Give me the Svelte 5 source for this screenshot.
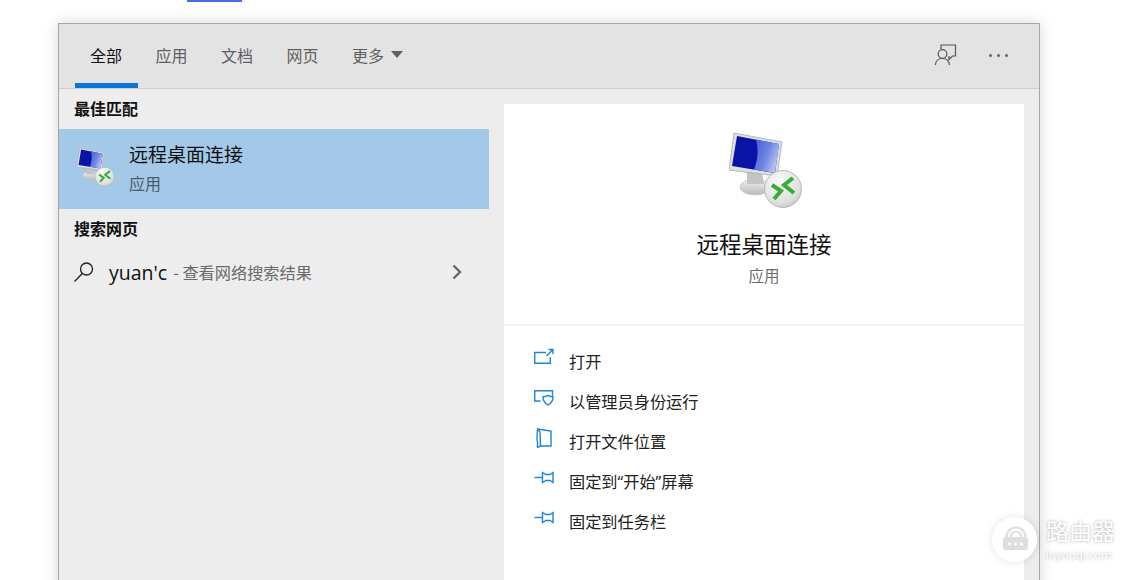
<script>
	const tabs = [
		{ label: '全部', active: true },
		{ label: '应用' },
		{ label: '文档' },
		{ label: '网页' },
		{ label: '更多', more: true }
	];

	const actions = [
		{ label: '打开', icon: 'open' },
		{ label: '以管理员身份运行', icon: 'shield' },
		{ label: '打开文件位置', icon: 'folder' },
		{ label: '固定到“开始”屏幕', icon: 'pin' },
		{ label: '固定到任务栏', icon: 'pin' }
	];
</script>

{#snippet rdpIcon(id, width, height)}
	<svg {width} {height} viewBox="15 12 74 76">
		<defs>
			<linearGradient id="gloss-{id}" x1="0" y1="0" x2="1" y2="0.5">
				<stop offset="0" stop-color="#3f5ad6" />
				<stop offset="0.6" stop-color="#7187e2" />
				<stop offset="1" stop-color="#b4c3f2" />
			</linearGradient>
			<radialGradient id="ball-{id}" cx="0.4" cy="0.3" r="0.85">
				<stop offset="0" stop-color="#fbfbfb" />
				<stop offset="0.7" stop-color="#dcdedd" />
				<stop offset="1" stop-color="#aeb2b0" />
			</radialGradient>
			<linearGradient id="base-{id}" x1="0" y1="0" x2="0" y2="1">
				<stop offset="0" stop-color="#f4f4f4" />
				<stop offset="1" stop-color="#b9b9b9" />
			</linearGradient>
		</defs>
		<ellipse cx="41" cy="67" rx="15" ry="8" fill="url(#base-{id})" stroke="#c6c6c6" stroke-width="0.8" />
		<path d="M33 52h15l2 12H33z" fill="#c4c4c4" />
		<path d="M20 13 L68 22 L63 56 L15 50 Z" fill="#dde0e3" stroke="#a4a9ad" stroke-width="0.8" />
		<path d="M23 16 L65 24 L61 53 L18 46 Z" fill="#0b12a6" />
		<path d="M42 19.500 L65 24 L61 53 L40 49.500 Q46 34 42 19.500 Z" fill="url(#gloss-{id})" />
		<circle cx="69" cy="69" r="18.500" fill="url(#ball-{id})" stroke="#a9adab" stroke-width="0.8" />
		<g fill="none" stroke="#35ae38" stroke-width="4" stroke-linejoin="miter">
			<path d="M58 65 L67 71 L60 79" />
			<path d="M79 58 L70 65 L80 73" />
		</g>
	</svg>
{/snippet}

{#snippet actionIcon(name)}
	<svg class="action__icon" width="20" height="20" viewBox="0 0 20 20" fill="none" stroke="#1f84d2" stroke-width="1.400">
		{#if name === 'open'}
			<path d="M12 4.500H.7v10.800h15.600V9" />
			<path d="M12.500 8 L18.500 2 M14.500 1.500h4.500V6" />
		{:else if name === 'shield'}
			<path d="M6.500 13H.7V2.700h17.800v5" />
			<path d="M9 8.800c1.800 0 3.400-.5 5-1.500 1.600 1 3.200 1.500 5 1.500 0 4-1.700 6.500-5 8.200-3.300-1.700-5-4.200-5-8.200z" fill="#fff" />
		{:else if name === 'folder'}
			<path d="M3.500 1 L17 3v15H6L4 19.500c-.8-1-.9-2-.3-3L3 10z" />
			<path d="M3.500 1 L6 4 L6.500 18" />
		{:else}
			<path d="M.5 9.500h8" />
			<path d="M8.500 4.500 L12 6.500h4 L19 4.500v10L16 12.500h-4L8.500 14.500z" />
		{/if}
	</svg>
{/snippet}

<div class="page">
	<div class="top-strip"></div>

	<div class="search">
		<header class="tabs">
			<nav class="tabs__list">
				{#each tabs as tab}
					<div class="tab" class:is-active={tab.active}>
						<span>{tab.label}</span>
						{#if tab.more}
							<span class="tab__caret"></span>
						{/if}
					</div>
				{/each}
			</nav>
			<div class="tabs__tools">
				<svg width="24" height="24" viewBox="0 0 24 24" fill="none" stroke="#555" stroke-width="1.200">
					<path d="M7 6V2h14.500v11h-3L15 16.500v-3.500" />
					<circle cx="8.500" cy="11" r="4.300" fill="#e3e3e3" />
					<path d="M1.500 22c0-4 3-6.500 7-6.500s6.500 2.500 7 6.500" />
				</svg>
				<div class="dots"><i></i><i></i><i></i></div>
			</div>
		</header>

		<div class="body">
			<aside class="results">
				<h2 class="results__title">最佳匹配</h2>
				<div class="best">
					<div class="best__icon">{@render rdpIcon('small', 38, 40)}</div>
					<div class="best__text">
						<div class="best__name">远程桌面连接</div>
						<div class="best__kind">应用</div>
					</div>
				</div>
				<h2 class="results__title results__title--web">搜索网页</h2>
				<div class="web">
					<svg class="web__icon" width="22" height="22" viewBox="0 0 22 22" fill="none" stroke="#222" stroke-width="1.300">
						<circle cx="13.500" cy="8" r="6" />
						<path d="M9.300 12.500 L1.500 20.500" />
					</svg>
					<span class="web__query">yuan'c</span>
					<span class="web__hint">- 查看网络搜索结果</span>
					<svg class="web__chevron" width="12" height="16" viewBox="0 0 12 16" fill="none" stroke="#666" stroke-width="2.400">
						<path d="M2.500 1.500 L9 8 L2.500 14.500" />
					</svg>
				</div>
			</aside>

			<section class="detail">
				<div class="card">
					<div class="card__hero">
						<div class="card__icon">{@render rdpIcon('large', 74, 76)}</div>
						<div class="card__name">远程桌面连接</div>
						<div class="card__kind">应用</div>
					</div>
					<ul class="actions">
						{#each actions as action}
							<li class="action">
								{@render actionIcon(action.icon)}
								<span>{action.label}</span>
							</li>
						{/each}
					</ul>
				</div>
			</section>
		</div>
	</div>

	<div class="watermark">
		<div class="watermark__badge">
			<svg width="45" height="45" viewBox="0 0 45 45" fill="none">
				<path d="M14.500 20a9.500 9.500 0 0 1 19 0" stroke="#dedede" stroke-width="2.200" />
				<path d="M18.500 20a5.500 5.500 0 0 1 11 0" stroke="#dedede" stroke-width="2.200" />
				<rect x="11" y="20" width="25" height="13" rx="3" fill="#dedede" />
				<circle cx="17.500" cy="27" r="1.600" fill="#fff" />
				<circle cx="23.500" cy="27" r="1.600" fill="#fff" />
				<circle cx="29.500" cy="27" r="1.600" fill="#fff" />
			</svg>
		</div>
		<div class="watermark__text">
			<div class="watermark__name">路由器</div>
			<div class="watermark__url">luyouqi.com</div>
		</div>
	</div>
</div>

<style>
	:global(body) {
		margin: 0;
		background: #fff;
	}

	.page {
		position: relative;
		width: 1133px;
		height: 580px;
		overflow: hidden;
		box-sizing: border-box;
		padding-left: 58px;
		background: #fff;
		font-family: "Noto Sans CJK SC", "Noto Sans", sans-serif;
	}

	.top-strip {
		width: 55px;
		height: 2px;
		margin-left: 129px;
		margin-bottom: 21px;
		background: #4a6ae0;
	}

	.search {
		width: 982px;
		height: 600px;
		box-sizing: border-box;
		border: 1px solid #a6a6a6;
		background: #ececec;
		box-shadow: 0 0 14px rgba(0, 0, 0, 0.16);
		display: flex;
		flex-direction: column;
	}

	.tabs {
		height: 65px;
		flex-shrink: 0;
		box-sizing: border-box;
		border-bottom: 1px solid #cdcdcd;
		background: #e3e3e3;
		display: flex;
		justify-content: space-between;
		padding: 0 16px;
	}

	.tabs__list {
		display: flex;
		gap: 2.500px;
	}

	.tab {
		position: relative;
		padding: 0 16px 3px 15px;
		display: flex;
		align-items: center;
		gap: 7px;
		height: 64px;
		box-sizing: border-box;
		font-size: 16px;
		color: #5f5f5f;
	}

	.tab.is-active {
		color: #111;
	}

	.tab.is-active::after {
		content: '';
		position: absolute;
		left: 0;
		right: 0;
		bottom: 0;
		height: 5px;
		background: #0a78d2;
	}

	.tab__caret {
		width: 0;
		height: 0;
		border-left: 6.500px solid transparent;
		border-right: 6.500px solid transparent;
		border-top: 7px solid #5f5f5f;
	}

	.tabs__tools {
		display: flex;
		align-items: center;
		gap: 31px;
		padding-right: 15px;
		padding-bottom: 2px;
	}

	.dots {
		display: flex;
		gap: 5px;
	}

	.dots i {
		width: 3px;
		height: 3px;
		border-radius: 50%;
		background: #666;
	}

	.body {
		display: flex;
		flex: 1;
	}

	.results {
		width: 430px;
		flex-shrink: 0;
		background: #ededed;
	}

	.results__title {
		margin: 0;
		height: 40px;
		padding: 0 0 2px 15px;
		box-sizing: border-box;
		display: flex;
		align-items: center;
		font-size: 16px;
		font-weight: 700;
		color: #111;
	}

	.best {
		height: 80px;
		background: #a4c8e8;
		display: flex;
		align-items: center;
	}

	.best__icon {
		width: 70px;
		height: 40px;
		padding-left: 18px;
		box-sizing: border-box;
		margin-top: -4px;
	}

	.best__text {
		margin-top: -3px;
	}

	.best__name {
		font-size: 19px;
		line-height: 26px;
		color: #111;
	}

	.best__kind {
		margin-top: 5px;
		font-size: 16px;
		line-height: 22px;
		color: #4e5c68;
	}

	.web {
		height: 46px;
		padding-left: 14px;
		padding-right: 26px;
		display: flex;
		align-items: center;
	}

	.web__icon {
		margin-right: 14px;
	}

	.web__query {
		font-family: "Open Sans", sans-serif;
		font-size: 19.500px;
		color: #111;
		margin-right: 6px;
	}

	.web__hint {
		font-size: 16.200px;
		color: #6a6a6a;
	}

	.web__chevron {
		margin-left: auto;
		margin-top: 0;
	}

	.detail {
		flex: 1;
		padding: 15px 15px 0;
	}

	.card {
		height: 100%;
		background: #fff;
	}

	.card__hero {
		height: 222px;
		box-sizing: border-box;
		border-bottom: 2px solid #f3f3f3;
		display: flex;
		flex-direction: column;
		align-items: center;
		padding-top: 28px;
	}

	.card__icon {
		height: 76px;
		margin-left: 4px;
	}

	.card__name {
		margin-top: 19px;
		font-size: 22.500px;
		line-height: 32px;
		color: #111;
	}

	.card__kind {
		margin-top: 5px;
		font-size: 15.500px;
		line-height: 22px;
		color: #6a6a6a;
	}

	.actions {
		margin: 0;
		padding: 15px 0 0 30px;
		list-style: none;
	}

	.action {
		height: 40px;
		display: flex;
		align-items: center;
		gap: 15px;
		font-family: "Open Sans", "Noto Sans CJK SC", sans-serif;
		font-size: 16.200px;
		color: #222;
	}

	.action__icon {
		margin-top: -6px;
	}

	.watermark {
		position: absolute;
		left: 992px;
		top: 517px;
		display: flex;
		gap: 9px;
		align-items: center;
	}

	.watermark__badge {
		width: 45px;
		height: 45px;
		border-radius: 50%;
		background: #fff;
		box-shadow: 0 0 8px rgba(0, 0, 0, 0.12);
	}

	.watermark__text {
		display: flex;
		flex-direction: column;
		align-items: flex-start;
		gap: 2px;
	}

	.watermark__name {
		font-family: "Liberation Sans", "Noto Sans CJK SC", sans-serif;
		font-size: 23px;
		line-height: 27px;
		color: #fff;
		text-shadow: 0 0 3px rgba(0, 0, 0, 0.35);
	}

	.watermark__url {
		font-family: "Open Sans", sans-serif;
		font-size: 11.500px;
		line-height: 13px;
		color: #fff;
		text-shadow: 0 0 3px rgba(0, 0, 0, 0.35);
	}
</style>
